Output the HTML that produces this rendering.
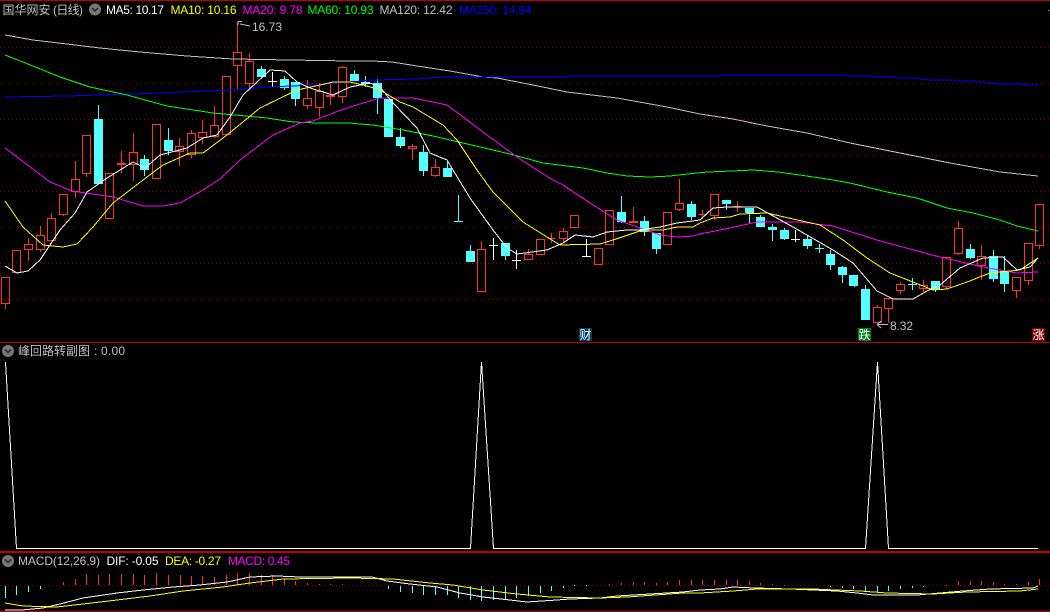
<!DOCTYPE html>
<html><head><meta charset="utf-8"><style>
html,body{margin:0;padding:0;background:#000;width:1050px;height:612px;overflow:hidden}
svg{display:block}
text{font-family:"Liberation Sans","WenQuanYi Zen Hei","Noto Sans CJK SC",sans-serif;font-size:12px;white-space:pre}
.l{fill:none;stroke-width:1;shape-rendering:crispEdges}
</style></head><body>
<svg width="1050" height="612" viewBox="0 0 1050 612" xmlns="http://www.w3.org/2000/svg">
<rect width="1050" height="612" fill="#000"/>
<g shape-rendering="crispEdges">
<path d="M0 47.5H1050M0 83.5H1050M0 119.5H1050M0 155.5H1050M0 191.5H1050M0 227.5H1050M0 263.5H1050M0 299.5H1050M0 585.5H1050" stroke="#8c0000" stroke-dasharray="1 3" fill="none"/>
<path d="M0 0.5H1050M0 342.5H1050M0 611.5H1050" stroke="#c00000" fill="none"/>
<rect x="0" y="551" width="1050" height="2" fill="#c00000"/>
<rect x="0" y="0" width="1050" height="1" fill="#c00000"/>
</g>
<!-- candles -->
<path fill="none" stroke="#ff3232" shape-rendering="crispEdges" d="M1.5 277.5H9.5V303.5H1.5ZM5.5 304V309M12.5 250.5H20.5V272.5H12.5ZM24.5 244.5H32.5V249.5H24.5ZM28.5 238V244M28.5 250V261M36.5 235.5H44.5V249.5H36.5ZM40.5 226V235M40.5 250V252M47.5 218.5H55.5V240.5H47.5ZM51.5 213V218M59.5 194.5H67.5V214.5H59.5ZM63.5 215V216M71.5 179.5H79.5V191.5H71.5ZM75.5 161V179M75.5 192V198M82.5 135.5H90.5V173.5H82.5ZM86.5 174V177M105.5 173.5H113.5V218.5H105.5ZM117.5 163.5H125.5V164.5H117.5ZM121.5 151V163M121.5 165V173M129.5 152.5H137.5V164.5H129.5ZM133.5 133V152M133.5 165V181M152.5 124.5H160.5V178.5H152.5ZM175.5 146.5H183.5V151.5H175.5ZM179.5 138V146M179.5 152V166M187.5 133.5H195.5V154.5H187.5ZM191.5 130V133M191.5 155V158M198.5 132.5H206.5V137.5H198.5ZM202.5 120V132M202.5 138V144M210.5 125.5H218.5V136.5H210.5ZM214.5 106V125M214.5 137V138M222.5 76.5H230.5V134.5H222.5ZM233.5 52.5H241.5V65.5H233.5ZM237.5 22V52M237.5 66V90M245.5 61.5H253.5V83.5H245.5ZM249.5 53V61M249.5 84V88M303.5 98.5H311.5V105.5H303.5ZM307.5 80V98M307.5 106V109M315.5 91.5H323.5V107.5H315.5ZM319.5 83V91M319.5 108V117M326.5 95.5H334.5V96.5H326.5ZM330.5 83V95M330.5 97V105M338.5 67.5H346.5V96.5H338.5ZM342.5 66V67M342.5 97V103M408.5 146.5H416.5V148.5H408.5ZM412.5 144V146M412.5 149V160M431.5 167.5H439.5V175.5H431.5ZM435.5 159V167M435.5 176V177M477.5 249.5H485.5V291.5H477.5ZM481.5 241V249M524.5 254.5H532.5V259.5H524.5ZM528.5 249V254M536.5 239.5H544.5V254.5H536.5ZM547.5 238.5H555.5M551.5 233V243M559.5 231.5H567.5V238.5H559.5ZM563.5 228V231M563.5 239V242M570.5 215.5H578.5V227.5H570.5ZM594.5 248.5H602.5V264.5H594.5ZM605.5 210.5H613.5V244.5H605.5ZM629.5 221.5H637.5V222.5H629.5ZM633.5 207V221M663.5 212.5H671.5V244.5H663.5ZM675.5 203.5H683.5V209.5H675.5ZM679.5 179V203M679.5 210V211M698.5 214.5H706.5M702.5 210V219M710.5 194.5H718.5V215.5H710.5ZM714.5 216V220M733.5 206.5H741.5M737.5 201V212M873.5 307.5H881.5V322.5H873.5ZM877.5 305V307M884.5 298.5H892.5V308.5H884.5ZM888.5 309V323M896.5 284.5H904.5V290.5H896.5ZM900.5 282V284M900.5 291V294M919.5 285.5H927.5V288.5H919.5ZM923.5 280V285M923.5 289V292M942.5 257.5H950.5V286.5H942.5ZM946.5 287V289M954.5 228.5H962.5V253.5H954.5ZM958.5 221V228M958.5 254V255M977.5 256.5H985.5V265.5H977.5ZM981.5 245V256M981.5 266V280M1012.5 277.5H1020.5V290.5H1012.5ZM1016.5 291V298M1024.5 243.5H1032.5V280.5H1024.5ZM1028.5 281V285M1035.5 204.5H1043.5V245.5H1035.5ZM1039.5 246V249"/>
<path fill="#54ffff" shape-rendering="crispEdges" d="M94 119H103V184H94ZM140 159H149V170H140ZM164 140H173V151H164ZM257 69H266V77H257ZM280 79H289V88H280ZM291 82H300V99H291ZM350 74H359V81H350ZM361 82H370V84H361ZM373 83H382V98H373ZM384 99H393V137H384ZM396 137H405V146H396ZM419 152H428V171H419ZM443 168H452V177H443ZM466 251H475V262H466ZM501 243H510V256H501ZM617 212H626V222H617ZM640 221H649V232H640ZM652 233H661V249H652ZM687 204H696V217H687ZM722 200H731V204H722ZM745 208H754V213H745ZM756 217H765V227H756ZM768 227H777V230H768ZM780 230H789V239H780ZM803 239H812V246H803ZM826 254H835V265H826ZM838 267H847V275H838ZM849 275H858V286H849ZM861 289H870V320H861ZM931 281H940V290H931ZM966 249H975V258H966ZM989 256H998V279H989ZM1000 271H1009V284H1000Z"/>
<path fill="none" stroke="#54ffff" shape-rendering="crispEdges" d="M98.5 105V119M144.5 155V176M168.5 128V155M261.5 66V69M284.5 76V90M295.5 99V106M354.5 70V74M365.5 76V87M377.5 79V114M400.5 128V148M423.5 145V176M447.5 161V168M454 221.5H463M458.5 195V222M470.5 245V251M505.5 256V260M621.5 196V223M644.5 216V236M656.5 249V254M691.5 201V220M726.5 204V210M749.5 213V223M760.5 215V217M772.5 224V241M784.5 228V240M807.5 236V249M815 248.5H824M819.5 244V253M830.5 250V270M842.5 266V283M854.5 286V287M865.5 285V289M908 284.5H917M912.5 278V290M935.5 290V292M970.5 244V259M993.5 250V282M1004.5 256V292"/>
<path fill="none" stroke="#fff" shape-rendering="crispEdges" d="M268 81.5H277M272.5 72V87M489 245.5H498M493.5 238V260M512 260.5H521M516.5 250V269M582 256.5H591M586.5 239V257M791 239.5H800M795.5 230V242"/>
<!-- MA lines -->
<polyline class="l" stroke="#c0c0c0" points="5,35 33,40 67,44 100,48 140,52 187,56 233,59 290,60 350,61 372,61 392,62 417,66 450,71 483,77 497,78 533,85 567,92 617,98 667,107 700,114 733,119 767,126 807,133 850,143 900,153 950,163 1000,172 1038,176"/>
<polyline class="l" stroke="#0000ff" points="5,97 67,96 100,95 133,94 180,92 233,90 267,87 317,85 350,82 373,80 417,79 443,77 567,77 570,76 720,76 722,75 847,75 848,76 872,76 873,77 896,77 897,78 919,78 920,79 930,80 953,80 955,81 976,81 978,82 988,82 990,83 1000,84 1022,84 1023,85 1038,85"/>
<polyline class="l" stroke="#00ff00" points="5,55 33,66 60,77 90,87 127,95 167,106 213,113 267,118 293,122 317,123 350,123 360,124 373,125 403,130 433,136 463,143 510,154 543,163 583,168 607,173 627,176 650,177 670,176 697,173 708,172 732,171 753,170 778,172 800,175 833,180 850,183 887,192 917,198 947,208 973,213 1000,220 1017,226 1038,231"/>
<polyline class="l" stroke="#ff00ff" points="5,148 25,163 50,182 72,191 113,197 143,206 163,206 180,203 203,190 220,179 240,160 273,135 300,123 313,121 333,113 350,107 380,98 413,98 447,105 467,120 487,135 517,157 537,170 553,180 563,185 590,203 617,220 640,228 660,235 677,237 693,236 700,234 730,228 757,222 800,222 833,226 880,241 940,257 983,267 1017,273 1038,272"/>
<polyline class="l" stroke="#ffff00" points="5,201 23,227 43,245 63,247 77,244 93,227 113,203 143,180 163,165 190,153 203,153 227,135 260,108 297,90 320,85 333,82 350,82 367,86 380,90 400,102 413,107 443,125 457,140 477,170 493,192 523,222 547,237 560,245 600,244 613,240 643,230 663,230 677,227 693,227 700,223 713,218 730,217 740,214 767,213 793,219 820,225 843,240 867,258 890,273 913,282 933,290 947,289 967,282 990,273 1020,270 1038,258"/>
<polyline class="l" stroke="#ffffff" points="5,266 17,273 28,271 40,260 60,230 75,213 87,192 107,178 133,162 145,168 160,155 187,148 203,138 217,135 230,117 243,95 270,70 285,71 297,82 310,88 333,95 350,87 370,83 380,87 393,103 417,128 430,153 447,160 453,170 470,198 493,230 507,248 517,254 547,250 563,243 575,235 593,237 607,232 627,230 640,230 660,227 677,223 700,220 713,208 727,207 757,207 793,227 833,250 853,263 877,291 893,299 913,299 927,291 940,285 960,268 983,258 1003,257 1017,270 1030,267 1038,258"/>
<!-- Sub pane -->
<polyline fill="none" stroke="#fff" stroke-width="1" shape-rendering="crispEdges" points="5.5,362 16.5,548.5 470.5,548.5 481.5,362 493.5,548.5 865.5,548.5 877.5,362 888.5,548.5 1038,548.5"/>
<!-- MACD bars -->
<path fill="none" stroke="#ff3232" shape-rendering="crispEdges" d="M63.5 582V585M75.5 579V585M86.5 574V585M98.5 575V585M109.5 574V585M121.5 574V585M133.5 574V585M144.5 575V585M156.5 573V585M168.5 575V585M180.5 575V585M191.5 576V585M202.5 576V585M214.5 577V585M226.5 575V585M237.5 573V585M249.5 573V585M261.5 575V585M272.5 575V585M284.5 579V585M295.5 581V585M307.5 583V585M319.5 584V585M330.5 584V585M342.5 584V585M609.5 584V585M621.5 583V585M633.5 582V585M644.5 582V585M656.5 583V585M667.5 582V585M679.5 580V585M691.5 580V585M702.5 580V585M714.5 580V585M726.5 580V585M737.5 580V585M749.5 581V585M760.5 583V585M772.5 584V585M784.5 585V586M946.5 585V586M958.5 581V585M970.5 581V585M981.5 581V585M993.5 582V585M1004.5 584V585M1016.5 584V585M1028.5 582V585M1039.5 579V585"/>
<path fill="none" stroke="#54ffff" shape-rendering="crispEdges" d="M5.5 586V598M16.5 586V595M28.5 586V592M40.5 586V589M388.5 586V589M400.5 586V592M412.5 586V593M423.5 586V595M435.5 586V595M447.5 586V595M458.5 586V598M470.5 586V600M481.5 586V601M493.5 586V600M505.5 586V599M516.5 586V598M528.5 586V596M540.5 586V593M551.5 586V591M563.5 586V588M574.5 585V586M586.5 585V586M830.5 586V587M842.5 586V588M853.5 586V589M865.5 586V592M877.5 586V593M888.5 586V591M900.5 586V589M912.5 586V588M923.5 586V587"/>
<polyline fill="none" stroke="#ffffff" stroke-width="1" shape-rendering="crispEdges" points="5,610 22,610 43,608 60,604 83,598 117,593 143,590 173,587 200,585 227,582 250,577 277,576 300,577 350,577 372,577 387,581 410,584 437,587 460,593 483,597 510,600 527,602 557,600 570,599 600,598 617,596 650,594 683,592 700,590 720,589 733,587 755,588 790,589 813,590 837,591 857,593 873,595 917,595 940,593 963,591 990,589 1033,588 1038,586"/>
<polyline fill="none" stroke="#ffff00" stroke-width="1" shape-rendering="crispEdges" points="5,603 23,606 57,607 83,604 117,600 150,596 183,591 223,587 250,583 283,579 350,578 393,579 430,583 453,585 483,590 517,594 550,597 600,598 627,597 683,593 700,593 733,591 757,589 813,589 860,591 887,593 933,594 967,592 1020,591 1038,589"/>
<!-- arrows -->
<path fill="none" stroke="#c0c0c0" d="M238 21.5H242M238 21.5V25M240 24L250 26"/>
<path fill="none" stroke="#c0c0c0" d="M877 324.5H888M877 324.5L881 321M877 324.5L881 328"/>
<!-- circles -->
<circle cx="95" cy="9.5" r="6" fill="#777"/><path d="M92 8L95 11L98 8" stroke="#222" stroke-width="1.4" fill="none"/>
<circle cx="8" cy="351" r="6" fill="#777"/><path d="M5 349.5L8 352.5L11 349.5" stroke="#222" stroke-width="1.4" fill="none"/>
<circle cx="8" cy="561" r="6" fill="#777"/><path d="M5 559.5L8 562.5L11 559.5" stroke="#222" stroke-width="1.4" fill="none"/>
<!-- top text -->
<text x="2.5" y="14" fill="#c0c0c0">国华网安</text>
<text x="53" y="14" fill="#c0c0c0" textLength="30" lengthAdjust="spacing">(日线)</text>
<text x="106" y="14" fill="#fff" textLength="58" lengthAdjust="spacing">MA5: 10.17</text>
<text x="170.5" y="14" fill="#ffff00" textLength="66" lengthAdjust="spacing">MA10: 10.16</text>
<text x="242.5" y="14" fill="#ff00ff" textLength="60" lengthAdjust="spacing">MA20: 9.78</text>
<text x="307.5" y="14" fill="#00ff00" textLength="66" lengthAdjust="spacing">MA60: 10.93</text>
<text x="379.5" y="14" fill="#c0c0c0" textLength="73" lengthAdjust="spacing">MA120: 12.42</text>
<text x="459" y="14" fill="#0000ff" textLength="72.5" lengthAdjust="spacing">MA250: 14.94</text>
<text x="252" y="31" fill="#c0c0c0" textLength="30" lengthAdjust="spacing">16.73</text>
<text x="890" y="330" fill="#c0c0c0" textLength="23" lengthAdjust="spacing">8.32</text>
<!-- tags -->
<rect x="579" y="328" width="13" height="13" fill="#0a3c64"/><text x="579.5" y="339" fill="#fff">财</text>
<rect x="858" y="328" width="13" height="13" fill="#007a14"/><text x="858.5" y="339" fill="#fff">跌</text>
<rect x="1032" y="328" width="13" height="13" fill="#800000"/><text x="1032.5" y="339" fill="#fff">涨</text>
<!-- sub pane title -->
<text x="18" y="355" fill="#c0c0c0">峰回路转副图</text>
<text x="94" y="355" fill="#c0c0c0" textLength="31" lengthAdjust="spacing">: 0.00</text>
<!-- MACD title -->
<text x="18" y="565" fill="#c0c0c0" textLength="82" lengthAdjust="spacing">MACD(12,26,9)</text>
<text x="106.5" y="565" fill="#fff" textLength="52" lengthAdjust="spacing">DIF: -0.05</text>
<text x="165" y="565" fill="#ffff00" textLength="56" lengthAdjust="spacing">DEA: -0.27</text>
<text x="228" y="565" fill="#ff00ff" textLength="62" lengthAdjust="spacing">MACD: 0.45</text>
<path d="M1048 10.5H1050" stroke="#777"/>
</svg>
</body></html>
